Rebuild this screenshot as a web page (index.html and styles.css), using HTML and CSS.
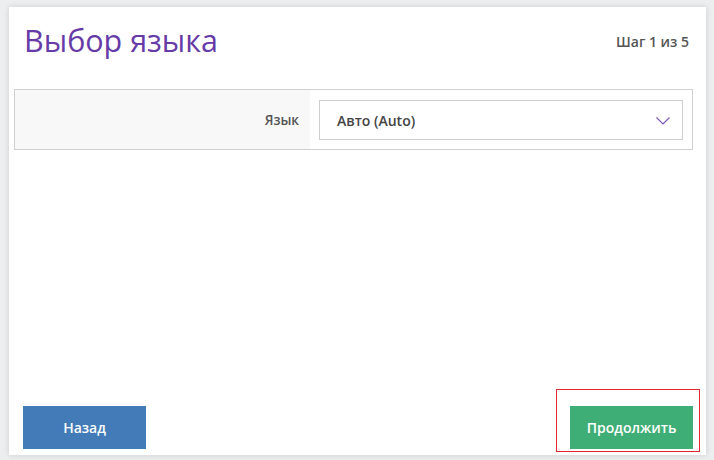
FILE: index.html
```html
<!DOCTYPE html>
<html lang="ru">
<head>
    <meta charset="utf-8">
    <title>Выбор языка</title>
    <link rel="stylesheet" href="styles.css">
</head>
<body>
    <div class="wizard">
        <div class="wizard-head">
            <h1>Выбор языка</h1>
            <span class="step">Шаг 1 из 5</span>
        </div>

        <div class="field-box">
            <label class="field-label" for="lang">Язык</label>
            <div class="field-value">
                <div class="select" id="lang">
                    <span>Авто (Auto)</span>
                    <svg class="chevron" width="14" height="8" viewBox="0 0 14 8">
                        <path d="M0.5 0.5 L7 7 L13.5 0.5" fill="none" stroke="#7d57c1" stroke-width="1.2"/>
                    </svg>
                </div>
            </div>
        </div>

        <div class="wizard-foot">
            <button type="button" class="btn btn-back">Назад</button>
            <div class="focus-ring">
                <button type="submit" class="btn btn-next">Продолжить</button>
            </div>
        </div>
    </div>
</body>
</html>
```

FILE: styles.css
```css
body {
    margin: 0;
    padding: 7px 8px 5px 9px;
    background-color: #edeef0;
    font-family: "Open Sans", "Noto Sans", sans-serif;
}

.wizard {
    height: 445px;
    background-color: #fff;
    box-shadow: 0 0 6px rgba(0, 0, 0, 0.14);
    padding: 0 13px 3px 5px;
    display: flex;
    flex-direction: column;
}

.wizard-head {
    height: 66px;
    margin-bottom: 16px;
    padding: 0 4px 0 10px;
    display: flex;
    align-items: center;
    justify-content: space-between;
}

h1 {
    margin: 0;
    font-size: 30.5px;
    font-weight: 400;
    color: #673ba7;
}

.step {
    font-size: 14px;
    font-weight: 600;
    color: #555;
    padding-top: 3px;
}

.field-box {
    display: flex;
    border: 1px solid #d0d0d0;
}

.field-label {
    width: 284px;
    padding-right: 11px;
    background-color: #f8f8f8;
    display: flex;
    align-items: center;
    justify-content: flex-end;
    font-size: 13.5px;
    font-weight: 600;
    color: #555;
}

.field-value {
    flex: 1;
    padding: 10px 9px 9px 9px;
}

.select {
    height: 38px;
    border: 1px solid #cfcfcf;
    display: flex;
    align-items: center;
    justify-content: space-between;
    padding: 0 12px 0 17px;
    font-size: 14px;
    font-weight: 600;
    color: #444;
}

.chevron {
    display: block;
    margin-top: 1px;
}

.wizard-foot {
    margin-top: auto;
    padding-left: 9px;
    display: flex;
    align-items: flex-end;
    justify-content: space-between;
}

.btn {
    width: 123px;
    height: 43px;
    border: none;
    border-radius: 0;
    font-family: "Open Sans", "Noto Sans", sans-serif;
    font-size: 14px;
    font-weight: 600;
    color: #fff;
    cursor: pointer;
}

.btn-back {
    background-color: #427bb7;
    margin-bottom: 3px;
}

.btn-next {
    background-color: #3fae76;
    display: block;
}

.focus-ring {
    border: 1px solid #e3262b;
    padding: 16px 6px 2px 13px;
    margin-right: -7px;
}
```
